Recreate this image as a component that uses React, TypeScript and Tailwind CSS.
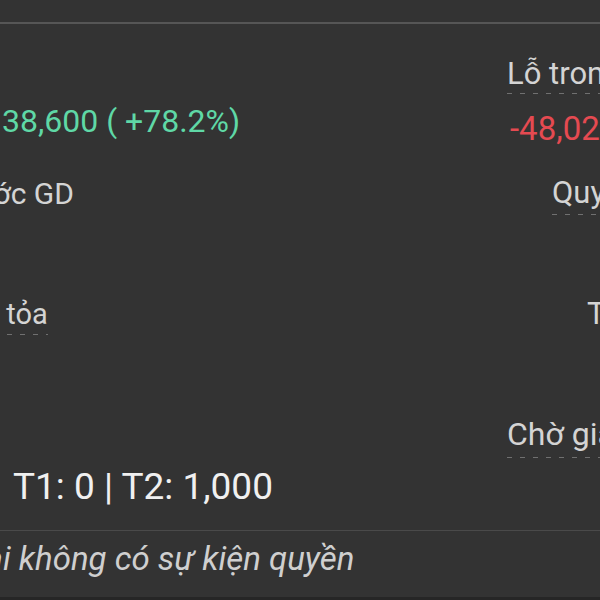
import React from 'react';

const dash =
  'h-px bg-[image:repeating-linear-gradient(to_right,#707070_0_5px,transparent_5px_13px)]';

function Label({ text }: { text: string }) {
  return (
    <span className="block whitespace-nowrap text-[31px] leading-[36px] text-[#d4d4d4]">{text}</span>
  );
}

export default function App() {
  return (
    <div className="h-[600px] w-[600px] overflow-hidden bg-[#333333] font-['Roboto','Liberation_Sans',sans-serif]">
      <div className="h-[22px]" />
      <div className="h-[2px] bg-[#565656]" />

      {/* Lỗ trong ngày */}
      <div className="flex h-[76px]">
        <div className="flex-1" />
        <div className="w-[93px] shrink-0 pt-[32px]">
          <Label text="Lỗ trong ngày" />
          <div className={`mt-[1px] w-[93px] ${dash}`} />
        </div>
      </div>

      {/* values */}
      <div className="flex h-[60px]">
        <div className="min-w-0 flex-1 pl-[2px] pt-[2px]">
          <span className="whitespace-nowrap text-[32px] leading-[38px] text-[#5fd8a6]">
            38,600 ( +78.2%)
          </span>
        </div>
        <div className="w-[93px] shrink-0 pl-[3px] pt-[10px]">
          <span className="whitespace-nowrap text-[33px] leading-[38px] text-[#e54a51]">
            -48,020,000
          </span>
        </div>
      </div>

      {/* Giá trước GD / Quyền */}
      <div className="flex h-[70px]">
        <div className="min-w-0 flex-1 pt-[16px]">
          <span className="-ml-[25px] block whitespace-nowrap text-[30px] leading-[35px] text-[#d4d4d4]">
            ước GD
          </span>
        </div>
        <div className="w-[93px] shrink-0 pl-[45px] pt-[15px]">
          <Label text="Quyền" />
          <div className={`mt-[3px] w-[60px] ${dash}`} />
        </div>
      </div>

      {/* Phong tỏa / T */}
      <div className="flex h-[120px]">
        <div className="min-w-0 flex-1 pt-[67px]">
          <div className="-ml-[84px] inline-flex flex-col">
            <span className="whitespace-nowrap text-[29px] leading-[34px] text-[#d4d4d4]">Phong tỏa</span>
            <div className={`mt-[3px] ${dash}`} />
          </div>
        </div>
        <div className="w-[93px] shrink-0 pl-[80px] pt-[66px]">
          <Label text="Tổng" />
        </div>
      </div>

      {/* Chờ giao */}
      <div className="flex h-[110px]">
        <div className="flex-1" />
        <div className="w-[93px] shrink-0 pt-[66px]">
          <span className="block whitespace-nowrap text-[32px] leading-[37px] text-[#d4d4d4]">Chờ giao</span>
          <div className={`mt-[4px] w-[93px] ${dash}`} />
        </div>
      </div>

      {/* T1 / T2 */}
      <div className="h-[70px] pl-[13px] pt-[5px]">
        <span className="whitespace-nowrap text-[37px] leading-[43px] text-[#f0f0f0]">T1: 0 | T2: 1,000</span>
      </div>

      <div className="h-px bg-[#4a4a4a]" />

      <div className="h-[66px] pt-[9px]">
        <span className="-ml-[25px] block whitespace-nowrap text-[33px] italic leading-[38px] text-[#cfcfcf]">
          tại không có sự kiện quyền
        </span>
      </div>
      <div className="h-[3px] bg-[#262626]" />
    </div>
  );
}
